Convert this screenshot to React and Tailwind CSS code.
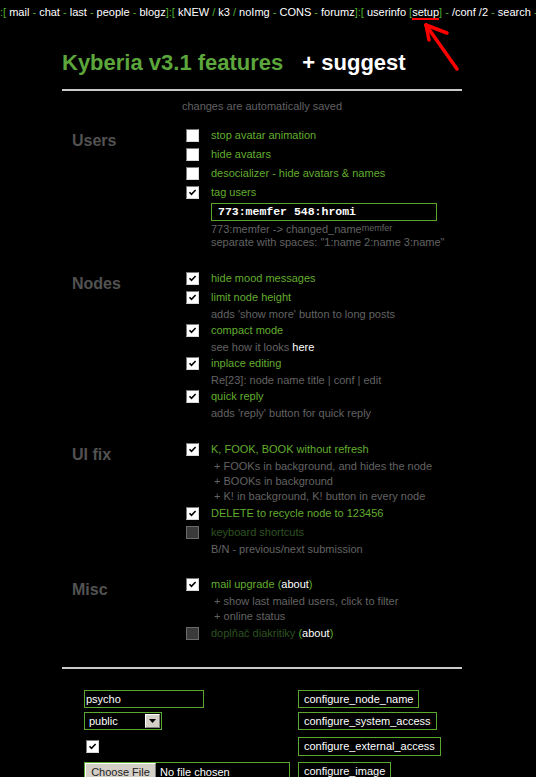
import React from 'react';

const green = 'text-[#62ad2f]';

function Box({ checked, disabled }) {
  if (disabled) {
    return (
      <span className="inline-block w-[13px] h-[13px] shrink-0 border border-[#6a6a6a] bg-[#3a3a3a]" />
    );
  }
  return (
    <span className="inline-flex items-center justify-center w-[13px] h-[13px] shrink-0 border border-t-[#7a7a7a] border-l-[#7a7a7a] border-r-[#d8d8d8] border-b-[#d8d8d8] bg-white">
      {checked && (
        <svg width="9" height="9" viewBox="0 0 9 9">
          <path d="M1.5 4.2 L3.5 6.3 L7.6 2" stroke="#000" strokeWidth="1.6" fill="none" />
        </svg>
      )}
    </span>
  );
}

function Opt({ checked = true, disabled, children }) {
  return (
    <div className="flex items-center h-[19px]">
      <Box checked={checked} disabled={disabled} />
      <span className={`ml-[12px] ${disabled ? 'text-[#2f5220]' : green}`}>{children}</span>
    </div>
  );
}

function Desc({ h = 'leading-[15px]', children }) {
  return <div className={`pl-[25px] text-[#636363] ${h}`}>{children}</div>;
}

function Section({ title, className = '', children }) {
  return (
    <div className={`grid grid-cols-[124px_1fr] ${className}`}>
      <div className="pl-[10px] pt-[5px] text-[16px] leading-[20px] font-bold text-[#525252]">{title}</div>
      <div>{children}</div>
    </div>
  );
}

function GreenBtn({ children }) {
  return (
    <span className="inline-flex items-center h-[18px] px-[5px] border border-[#5ca82f] text-white leading-none">
      {children}
    </span>
  );
}

function Nav() {
  const g = 'text-[#4fae2c]';
  const w = 'text-white';
  return (
    <div className="h-[24px] leading-[24px] text-[11px] whitespace-nowrap overflow-hidden">
      <span className={g}>:[ </span>
      <span className={w}>mail</span>
      <span className={g}> - </span>
      <span className={w}>chat</span>
      <span className={g}> - </span>
      <span className={w}>last</span>
      <span className={g}> - </span>
      <span className={w}>people</span>
      <span className={g}> - </span>
      <span className={w}>blogz</span>
      <span className={g}>]:[ </span>
      <span className={w}>kNEW</span>
      <span className={g}> / </span>
      <span className={w}>k3</span>
      <span className={g}> / </span>
      <span className={w}>noImg</span>
      <span className={g}> - </span>
      <span className={w}>CONS</span>
      <span className={g}> - </span>
      <span className={w}>forumz</span>
      <span className={g}>]:[ </span>
      <span className={w}>userinfo </span>
      <span className={g}>[</span>
      <span className={`${w} border-b-2 border-[#ff0000]`}>setup</span>
      <span className={g}>]</span>
      <span className={g}> - </span>
      <span className={w}>/conf</span>
      <span className={w}> /2</span>
      <span className={g}> - </span>
      <span className={w}>search</span>
      <span className={g}> -</span>
    </div>
  );
}

export default function App() {
  return (
    <div className="relative w-[536px] h-[777px] overflow-hidden bg-black font-['Liberation_Sans',Arial,sans-serif] text-[11px]">
      <Nav />

      {/* red annotation arrow */}
      <svg className="absolute left-0 top-0" width="536" height="90" viewBox="0 0 536 90">
        <g stroke="#ff0000" strokeWidth="3.5" strokeLinecap="round" fill="none">
          <path d="M457 69 L426 25" />
          <path d="M426 25 L429 40" />
          <path d="M426 25 L447 33" />
        </g>
      </svg>

      <div className="ml-[62px] w-[400px]">
        <div className="mt-[26px] h-[24px] flex items-center text-[22px] font-bold">
          <span className="text-[#5ca63c]">Kyberia v3.1 features</span>
          <span className="ml-[19px] text-white">+ suggest</span>
        </div>
        <div className="mt-[15px] h-[2px] bg-[#c9c9c9]" />
        <div className="mt-[8px] leading-[15px] text-center text-[#606060]">changes are automatically saved</div>

        <Section title="Users" className="mt-[12px]">
          <Opt checked={false}>stop avatar animation</Opt>
          <Opt checked={false}>hide avatars</Opt>
          <Opt checked={false}>desocializer - hide avatars &amp; names</Opt>
          <Opt>tag users</Opt>
          <div className="ml-[25px] mt-[1px] w-[226px] h-[18px] border border-[#5ca82f] flex items-center pl-[6px] font-['Liberation_Mono',monospace] font-bold text-[11.5px] text-white">
            773:memfer 548:hromi
          </div>
          <div className="pl-[25px] text-[#636363] h-[15px] leading-[17px]">
            773:memfer -&gt; changed_name<sup className="text-[9px] relative -top-[2px]">memfer</sup>
          </div>
          <div className="pl-[25px] text-[#636363] leading-[13px]">
            separate with spaces: "1:name 2:name 3:name"
          </div>
        </Section>

        <Section title="Nodes" className="mt-[20px]">
          <Opt>hide mood messages</Opt>
          <Opt>limit node height</Opt>
          <Desc h="leading-[14px]">adds 'show more' button to long posts</Desc>
          <Opt>compact mode</Opt>
          <Desc h="leading-[14px]">
            see how it looks <span className="text-white">here</span>
          </Desc>
          <Opt>inplace editing</Opt>
          <Desc h="leading-[14px]">Re[23]: node name title | conf | edit</Desc>
          <Opt>quick reply</Opt>
          <Desc h="leading-[14px]">adds 'reply' button for quick reply</Desc>
        </Section>

        <Section title="UI fix" className="mt-[20px]">
          <Opt>K, FOOK, BOOK without refresh</Opt>
          <Desc>&nbsp;+ FOOKs in background, and hides the node</Desc>
          <Desc>&nbsp;+ BOOKs in background</Desc>
          <Desc>&nbsp;+ K! in background, K! button in every node</Desc>
          <Opt>DELETE to recycle node to 123456</Opt>
          <Opt disabled>keyboard shortcuts</Opt>
          <Desc>B/N - previous/next submission</Desc>
        </Section>

        <Section title="Misc" className="mt-[18px]">
          <Opt>
            mail upgrade (<span className="text-white">about</span>)
          </Opt>
          <Desc>&nbsp;+ show last mailed users, click to filter</Desc>
          <Desc>&nbsp;+ online status</Desc>
          <Opt disabled>
            doplňač diakritiky <span className="text-[#62ad2f]">(<span className="text-white">about</span>)</span>
          </Opt>
        </Section>

        <div className="mt-[24px] h-[2px] bg-[#c9c9c9]" />

        <div className="ml-[22px] mt-[21px] text-[11px]">
          <div className="flex items-center h-[18px]">
            <div className="w-[214px]">
              <div className="w-[120px] h-[18px] border border-[#5ca82f] flex items-center pl-[1px] text-white">psycho</div>
            </div>
            <GreenBtn>configure_node_name</GreenBtn>
          </div>
          <div className="flex items-center h-[18px] mt-[4px]">
            <div className="w-[214px]">
              <div className="w-[78px] h-[18px] border border-[#5ca82f] flex items-center justify-between text-white">
                <span className="pl-[4px]">public</span>
                <span className="w-[15px] h-[14px] mr-[1px] bg-[#d4d0c8] border border-t-white border-l-white border-r-[#808080] border-b-[#808080] flex items-center justify-center">
                  <svg width="7" height="4" viewBox="0 0 7 4">
                    <path d="M0 0 L7 0 L3.5 4 Z" fill="#000" />
                  </svg>
                </span>
              </div>
            </div>
            <GreenBtn>configure_system_access</GreenBtn>
          </div>
          <div className="flex items-center h-[19px] mt-[7px]">
            <div className="w-[214px] pl-[2px] flex">
              <Box checked />
            </div>
            <span className="inline-flex items-center h-[19px] px-[5px] border border-[#5ca82f] text-white">
              configure_external_access
            </span>
          </div>
          <div className="flex items-start mt-[6px]">
            <div className="w-[214px]">
              <div className="w-[206px] h-[20px] border border-[#5ca82f] flex items-stretch">
                <span className="w-[71px] bg-[#d4d0c8] border border-t-white border-l-white border-r-[#808080] text-[#222] flex items-center justify-center">
                  Choose File
                </span>
                <span className="pl-[4px] text-white flex items-center">No file chosen</span>
              </div>
            </div>
            <GreenBtn>configure_image</GreenBtn>
          </div>
        </div>
      </div>
    </div>
  );
}
